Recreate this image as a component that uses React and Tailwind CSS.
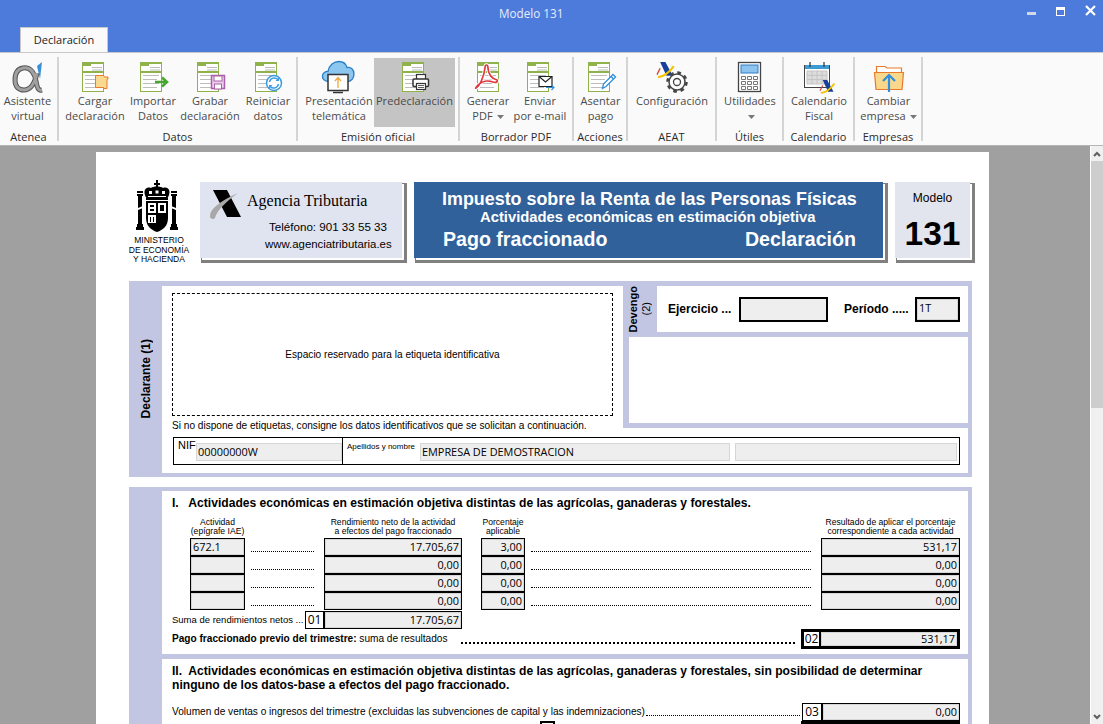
const GREEN = "#8fb24a";

function Caret() {
  return (
    <svg width="7" height="4" viewBox="0 0 7 4" className="inline-block ml-[4px] align-middle">
      <path d="M0 0h7L3.500 4z" fill="#777" />
    </svg>
  );
}

function Doc({ dx = 0, children }) {
  return (
    <svg width="40" height="34" viewBox="0 0 40 34">
      <g transform={`translate(${dx} 0)`}>
        <rect x="7.500" y="2.500" width="21" height="29" fill="#fff" stroke={GREEN} />
        <rect x="7" y="2" width="22" height="2" fill={GREEN} />
        <rect x="7" y="4" width="9" height="2" fill={GREEN} />
        <rect x="8" y="11" width="20" height="2" fill={GREEN} />
        <path d="M17 7.500h10M17 10h10M10 15.500h16M10 19.500h14M10 23.500h16M10 27.500h14" stroke="#bdbdbd" strokeWidth="1" />
      </g>
      {children}
    </svg>
  );
}

function AeatMark({ x = 0, y = 0, s = 1 }) {
  return (
    <g transform={`translate(${x} ${y}) scale(${s})`}>
      <path d="M3 0h5l7 13H9z" fill="#16409a" />
      <path d="M1 14C5 15 12 10 16 4" fill="none" stroke="#f5c400" strokeWidth="2" />
      <path d="M0 12l3-6" fill="none" stroke="#d9363a" strokeWidth="1.200" />
    </g>
  );
}

const icons = {
  alpha: (
    <svg width="40" height="34" viewBox="0 0 40 34">
      <path d="M34 30c-4 1-5-3-6-9C26 11 21 7 15 8 9 9 7 14 7 20c0 7 4 10 9 10 7 0 11-8 13-17" fill="none" stroke="#555" strokeWidth="5" />
      <path d="M34 30c-4 1-5-3-6-9C26 11 21 7 15 8 9 9 7 14 7 20c0 7 4 10 9 10 7 0 11-8 13-17" fill="none" stroke="#a0a0a0" strokeWidth="3" />
      <path d="M29 6l5-4-2 17z" fill="#3a8fd8" />
    </svg>
  ),
  load: (
    <Doc>
      <path d="M20.500 15.500h8l1 1.500h3.500v2l-1 .5v9h-3l-.5-1h-8z" fill="#f9d88f" stroke="#e87a2a" />
    </Doc>
  ),
  import: (
    <Doc>
      <path d="M22 22h12M29 17.500l5 4.500-5 4.500" fill="none" stroke="#4aa52e" strokeWidth="2.500" />
    </Doc>
  ),
  save: (
    <Doc>
      <path d="M21.500 15.500h13v13h-13z" fill="#ecd0ec" stroke="#a860a8" strokeWidth="1.500" />
      <rect x="24" y="16" width="8" height="5" fill="#fff" stroke="#a860a8" />
      <rect x="24.500" y="24" width="7" height="5" fill="#fff" stroke="#a860a8" />
    </Doc>
  ),
  reset: (
    <Doc>
      <circle cx="26" cy="23" r="7.500" fill="#fff" stroke="#3a9ae0" strokeWidth="1.500" />
      <path d="M21.500 22a4.800 4.800 0 0 1 8.300-2.500M30.500 24a4.800 4.800 0 0 1-8.300 2.500" fill="none" stroke="#3a9ae0" strokeWidth="1.500" />
      <path d="M31 17.500v3.500h-3.500M21 28.500V25h3.500" fill="#3a9ae0" />
    </Doc>
  ),
  cloud: (
    <svg width="40" height="34" viewBox="0 0 40 34">
      <path d="M10 21.500C5 21.500 3 18.500 3.500 15.500 4 12.500 7 11 9 11.500 10 5 15 1.500 20 1.500c4 0 7 2.500 8 6 4-1 7 2 7 6.500s-3 7.500-7 7.500z" fill="#8cc7f0" stroke="#2a7fc4" strokeWidth="1.300" />
      <rect x="9" y="14.500" width="20" height="16" fill="#fff" stroke="#333" strokeWidth="1.500" />
      <path d="M14 32.500h10" stroke="#333" strokeWidth="1.500" />
      <path d="M19 28V18M16 21l3-3.500 3 3.500" fill="none" stroke="#f0a83c" strokeWidth="1.300" />
    </svg>
  ),
  print: (
    <Doc>
      <rect x="21.500" y="14.500" width="9" height="5" fill="#fff" stroke="#333" strokeWidth="1.200" />
      <rect x="18" y="19" width="15.500" height="7.500" rx="1" fill="#fff" stroke="#333" strokeWidth="1.500" />
      <rect x="21.500" y="23.500" width="9" height="6" fill="#fff" stroke="#333" strokeWidth="1.200" />
      <path d="M23 25.500h6M23 27.500h6" stroke="#333" strokeWidth=".8" />
    </Doc>
  ),
  pdf: (
    <Doc dx={2}>
      <path d="M8 28c4-2 8-12 9-20 0-4 3-4 3 0 0 6 4 11 9 12 1 2-1 3-4 2-5-2-11-1-15 3-2 2-3 4-2 3z" fill="none" stroke="#fff" strokeWidth="3.500" />
      <path d="M8 28c4-2 8-12 9-20 0-4 3-4 3 0 0 6 4 11 9 12 1 2-1 3-4 2-5-2-11-1-15 3-2 2-3 4-2 3z" fill="none" stroke="#e0383e" strokeWidth="1.700" />
    </Doc>
  ),
  mail: (
    <Doc>
      <path d="M19 16.500h13v10H19z" fill="#fff" stroke="#222" strokeWidth="1.200" />
      <path d="M19 16.500l6.500 5.500 6.500-5.500" fill="none" stroke="#222" strokeWidth="1.200" />
      <path d="M26 27.500h8M31.500 25l2.500 2.500-2.500 2.500" fill="none" stroke="#2f8fdc" strokeWidth="1.100" />
    </Doc>
  ),
  pen: (
    <Doc>
      <path d="M21.500 28.500l1-4.500L32 14.500l2.500 2.500-9.500 9.500z" fill="#fff" stroke="#2f8fdc" strokeWidth="1.300" />
      <path d="M30 16.500l2.500 2.500" stroke="#2f8fdc" strokeWidth="1.200" />
    </Doc>
  ),
  gear: (
    <svg width="40" height="34" viewBox="0 0 40 34">
      <AeatMark x={5} y={2} s={1.050} />
      <circle cx="25" cy="22" r="8" fill="#fff" stroke="#444" strokeWidth="1.500" />
      <circle cx="25" cy="22" r="9.500" fill="none" stroke="#444" strokeWidth="2.500" strokeDasharray="3.700 3.760" />
      <circle cx="25" cy="22" r="3.500" fill="#fff" stroke="#444" strokeWidth="1.300" />
    </svg>
  ),
  calc: (
    <svg width="40" height="34" viewBox="0 0 40 34">
      <rect x="8.500" y="2.500" width="22" height="29" fill="#fff" stroke="#444" strokeWidth="1.300" />
      <rect x="11" y="5" width="17" height="8" fill="#8cc4ef" stroke="#2f7fc1" />
      <path d="M11.500 16.500h4v3h-4zM17.500 16.500h4v3h-4zM23.500 16.500h4v3h-4zM11.500 21.500h4v3h-4zM17.500 21.500h4v3h-4zM23.500 21.500h4v3h-4zM11.500 26.500h4v3h-4zM17.500 26.500h4v3h-4zM23.500 26.500h4v3h-4z" fill="#fff" stroke="#777" />
    </svg>
  ),
  calendar: (
    <svg width="40" height="34" viewBox="0 0 40 34">
      <rect x="5.500" y="5.500" width="25" height="22" fill="#fff" stroke="#444" />
      <rect x="6" y="5" width="24" height="4" fill="#3d9bd4" />
      <path d="M11 2v5M25 2v5" stroke="#333" strokeWidth="1.200" />
      <path d="M8 11h20v13H8zM8 15.300h20M8 19.600h20M13 11v13M18 11v13M23 11v13" fill="#ddd" stroke="#c4c4c4" />
      <AeatMark x={21} y={20} s={0.9} />
    </svg>
  ),
  folder: (
    <svg width="40" height="34" viewBox="0 0 40 34">
      <path d="M7.500 13V6.500H16l2 1.500h14.500v5" fill="#fff" stroke="#e87a2a" strokeWidth="1.200" />
      <path d="M5.500 12.500h29l-1.500 17H7z" fill="#f9d88b" stroke="#e87a2a" strokeWidth="1.200" />
      <path d="M20 32V16M14 21l6-6 6 6" fill="none" stroke="#2f8fdc" strokeWidth="2.200" />
    </svg>
  ),
};

const groups = [
  { label: "Atenea", w: "w-[59px]", pad: "", items: [{ w: "w-[55px]", icon: "alpha", lines: ["Asistente", "virtual"] }] },
  {
    label: "Datos",
    w: "w-[239px]",
    pad: "pl-[6px]",
    items: [
      { w: "w-[60px]", icon: "load", lines: ["Cargar", "declaración"] },
      { w: "w-[56px]", icon: "import", lines: ["Importar", "Datos"] },
      { w: "w-[58px]", icon: "save", lines: ["Grabar", "declaración"] },
      { w: "w-[58px]", icon: "reset", lines: ["Reiniciar", "datos"] },
    ],
  },
  {
    label: "Emisión oficial",
    w: "w-[162px]",
    pad: "pl-[6px]",
    items: [
      { w: "w-[70px]", icon: "cloud", lines: ["Presentación", "telemática"] },
      { w: "w-[81px]", icon: "print", lines: ["Predeclaración"], active: true },
    ],
  },
  {
    label: "Borrador PDF",
    w: "w-[114px]",
    pad: "pl-[4px]",
    items: [
      { w: "w-[48px]", icon: "pdf", lines: ["Generar", "PDF"], caret: true },
      { w: "w-[56px]", icon: "mail", lines: ["Enviar", "por e-mail"] },
    ],
  },
  { label: "Acciones", w: "w-[54px]", pad: "", items: [{ w: "w-[53px]", icon: "pen", lines: ["Asentar", "pago"] }] },
  { label: "AEAT", w: "w-[89px]", pad: "", items: [{ w: "w-[88px]", icon: "gear", lines: ["Configuración"] }] },
  { label: "Útiles", w: "w-[67px]", pad: "", items: [{ w: "w-[66px]", icon: "calc", lines: ["Utilidades", ""], caret: true }] },
  { label: "Calendario", w: "w-[71px]", pad: "", items: [{ w: "w-[70px]", icon: "calendar", lines: ["Calendario", "Fiscal"] }] },
  { label: "Empresas", w: "w-[68px]", pad: "", items: [{ w: "w-[67px]", icon: "folder", lines: ["Cambiar", "empresa"], caret: true }] },
];

function RibbonButton({ item }) {
  return (
    <div className={`${item.w} h-[69px] mt-[1px] shrink-0 flex flex-col items-center pt-[2px] ${item.active ? "bg-[#c4c4c4]" : ""}`}>
      {icons[item.icon]}
      <div className="-mt-[1px] text-center leading-[15px] text-[#4a4a4a] whitespace-nowrap">
        {item.lines.map((l, i) => (
          <div key={i} className="h-[15px]">
            {l}
            {item.caret && i === 1 && <Caret />}
          </div>
        ))}
      </div>
    </div>
  );
}

function Ribbon() {
  return (
    <div className="h-[93px] shrink-0 bg-[#fafafa] border-t border-[#c8c8c8] flex pt-[4px] font-['Open_Sans',sans-serif] text-[11px] tracking-[0.05px]">
      {groups.map((g) => (
        <div key={g.label} className={`${g.w} shrink-0 h-[84px] border-r-2 border-[#d4d4d4] flex flex-col`}>
          <div className={`flex ${g.pad} h-[69px]`}>
            {g.items.map((it) => (
              <RibbonButton key={it.icon} item={it} />
            ))}
          </div>
          <div className="mt-[3px] text-center leading-[15px] text-[#2a2a2a] whitespace-nowrap">{g.label}</div>
        </div>
      ))}
    </div>
  );
}

const boxShadow = "shadow-[2px_2px_0_#fff,3px_3px_0_2px_#808080]";

function Emblem() {
  return (
    <svg width="44" height="53" viewBox="0 0 44 53" className="mr-[4px] shrink-0">
      <path d="M21 0h2v3h2v2h-2v2h-2V5h-2V3h2z" fill="#000" />
      <path d="M12 19C7 12 10 6 16 8c2-2 10-2 12 0 6-2 9 4 4 11z" fill="#000" />
      <path d="M14 11h3v3h-3zM20.500 10.500h3v3h-3zM27 11h3v3h-3zM13 16h18v1H13z" fill="#fff" />
      <rect x="11" y="18" width="22" height="2" fill="#000" />
      <path d="M11 21h22v17c0 8-5 12-11 14-6-2-11-6-11-14z" fill="#000" />
      <path d="M13 23h8v10h-8zM23 23h8v10h-8zM13 35h8v8h-8z" fill="#fff" />
      <path d="M15 25h4v2h-4zM15 29h4v2h-4zM25 25h4v6h-4zM25 36h5v8h-5zM15 37h1v5h-1zM18 37h1v5h-1z" fill="#000" />
      <path d="M2 14h6v2H7v28h1v3h1v3H1v-3h1v-3h1V16H2zM36 14h6v2h-1v28h1v3h1v3h-8v-3h1v-3h1V16h-1z" fill="#000" />
      <path d="M2 11h6v2H2zM36 11h6v2h-6z" fill="#000" />
      <path d="M3 28l5-2v2l-5 2zM36 26l5 2v2l-5-2z" fill="#fff" />
    </svg>
  );
}

function AeatLogo() {
  return (
    <svg width="34" height="32" viewBox="0 0 34 32" className="shrink-0">
      <path d="M5 1h14l14 27H19z" fill="#000" />
      <path d="M2 27C2 20 12 12 30 4 18 13 9 21 7 29 5 31 2 30 2 27z" fill="#a8a8a8" />
    </svg>
  );
}

function PageHeader() {
  return (
    <div className="flex items-start pt-[30px] font-['Liberation_Sans',sans-serif]">
      <div className="w-[60px] h-[76px] -mt-[2px] mr-[11px] flex flex-col items-center">
        <Emblem />
        <div className="mt-[3px] text-center text-[8.500px] leading-[9.500px] whitespace-nowrap">
          MINISTERIO
          <br />
          DE ECONOMÍA
          <br />
          Y HACIENDA
        </div>
      </div>
      <div className={`w-[202px] h-[76px] bg-[#e0e4f0] ${boxShadow} pl-[8px] pt-[7px]`}>
        <div className="flex items-start">
          <AeatLogo />
          <div className="ml-[5px] mt-[3px] font-['Liberation_Serif',serif] text-[16px] leading-[18px] whitespace-nowrap">Agencia Tributaria</div>
        </div>
        <div className="ml-[61px] -mt-[1px] text-[11.600px] leading-[14px]">Teléfono: 901 33 55 33</div>
        <div className="ml-[57px] mt-[3px] text-[11.400px] leading-[14px]">www.agenciatributaria.es</div>
      </div>
      <div className={`ml-[12px] w-[469px] h-[76px] bg-[#30619a] ${boxShadow} text-white font-bold pl-[28px] pr-[27px] pt-[7px] whitespace-nowrap`}>
        <div className="text-[17.900px] leading-[20px]">Impuesto sobre la Renta de las Personas Físicas</div>
        <div className="text-[14.800px] leading-[16px] ml-[38px]">Actividades económicas en estimación objetiva</div>
        <div className="flex justify-between text-[19.600px] leading-[22px] mt-[3px]">
          <span className="ml-[1px]">Pago fraccionado</span>
          <span>Declaración</span>
        </div>
      </div>
      <div className={`ml-[12px] w-[75px] h-[76px] bg-[#e2e4ee] ${boxShadow} flex flex-col items-center pt-[9px]`}>
        <div className="text-[12px] leading-[14px]">Modelo</div>
        <div className="font-bold text-[33.500px] leading-[40px] mt-[9px]">131</div>
      </div>
    </div>
  );
}

const inputFont = "font-['Open_Sans',sans-serif] whitespace-nowrap";
const inputText = "font-['Open_Sans',sans-serif] whitespace-nowrap text-[10.900px]";
const inputFill = "bg-[#eeeeee] shadow-[inset_0_0_0_1px_#d6d6d6]";

function Declarante() {
  return (
    <div className="mt-[23px] h-[196px] flex bg-[#c2c6e2]">
      <div className="w-[33px] flex items-center justify-center">
        <span className="[writing-mode:vertical-rl] rotate-180 font-bold text-[12px]">Declarante (1)</span>
      </div>
      <div className="w-[810px]">
        <div className="h-[147px] flex">
          <div className="w-[461px] mt-[5px] h-[142px] bg-white pl-[10px] pt-[7px]">
            <div className="w-[441px] h-[123px] border border-dashed border-black flex items-center justify-center text-[10.100px]">
              Espacio reservado para la etiqueta identificativa
            </div>
            <div className="mt-[4px] text-[10.100px] leading-[12px] whitespace-nowrap">
              Si no dispone de etiquetas, consigne los datos identificativos que se solicitan a continuación.
            </div>
          </div>
          <div className="w-[349px] pt-[5px] pr-[4px]">
            <div className="h-[46px] flex">
              <div className="w-[34px] flex items-center justify-center leading-[13px]">
                <span className="[writing-mode:vertical-rl] rotate-180 text-[11px] text-center">
                  <b>Devengo</b>
                  <br />
                  (2)
                </span>
              </div>
              <div className="flex-1 bg-white flex items-center pl-[11px] text-[12px] font-bold whitespace-nowrap">
                <span className="w-[71px]">Ejercicio ...</span>
                <div className="w-[89px] h-[25px] border-2 border-black bg-[#eeeeee]" />
                <span className="ml-[16px] w-[71px]">Período .....</span>
                <div className={`w-[45px] h-[25px] border-2 border-black font-normal pl-[2px] leading-[18px] ${inputText} ${inputFill}`}>1T</div>
              </div>
            </div>
            <div className="mt-[5px] ml-[6px] h-[86px] bg-white" />
          </div>
        </div>
        <div className="h-[45px] mr-[4px] bg-white pt-[9px] pl-[11px]">
          <div className="w-[787px] h-[28px] border border-black flex items-center">
            <div className="w-[169px] h-full border-r border-black flex items-start pl-[4px] pt-[1px]">
              <span className="text-[11px] leading-[13px] w-[18px]">NIF</span>
              <div className={`w-[146px] h-[18px] mt-[4px] pl-[2px] leading-[18px] ${inputText} ${inputFill}`}>00000000W</div>
            </div>
            <div className="flex items-start pl-[4px] h-full pt-[5px]">
              <span className="text-[8px] leading-[8px] w-[73px] whitespace-nowrap">Apellidos y nombre</span>
              <div className={`w-[310px] h-[18px] pl-[2px] leading-[18px] ${inputText} ${inputFill}`}>EMPRESA DE DEMOSTRACION</div>
              <div className={`w-[222px] h-[18px] ml-[5px] ${inputFill}`} />
            </div>
          </div>
        </div>
      </div>
    </div>
  );
}

const rowCols = "grid grid-cols-[55px_79px_138px_19px_44px_296px_139px]";

const rows = [
  { iae: "672.1", net: "17.705,67", pct: "3,00", res: "531,17" },
  { iae: "", net: "0,00", pct: "0,00", res: "0,00" },
  { iae: "", net: "0,00", pct: "0,00", res: "0,00" },
  { iae: "", net: "0,00", pct: "0,00", res: "0,00" },
];

function Cell({ children, className = "", plain = false }) {
  return <div className={`h-[18px] border border-black leading-[16px] ${plain ? `${inputFont} text-[12px] bg-white text-center` : `${inputText} px-[2px] ${inputFill}`} ${className}`}>{children}</div>;
}

function Dots() {
  return (
    <div className="pl-[6px] pr-[10px] pt-[13px]">
      <div className="border-b border-dotted border-black" />
    </div>
  );
}

function ActivityTable() {
  return (
    <div className="ml-[28px]">
      <div className={`${rowCols} h-[21px] pt-[1px] text-[8.600px] leading-[9px] text-center whitespace-nowrap`}>
        <div>Actividad<br />(epígrafe IAE)</div>
        <div />
        <div>Rendimiento neto de la actividad<br />a efectos del pago fraccionado</div>
        <div />
        <div>Porcentaje<br />aplicable</div>
        <div />
        <div>Resultado de aplicar el porcentaje<br />correspondiente a cada actividad</div>
      </div>
      {rows.map((r, i) => (
        <div key={i} className={rowCols}>
          <Cell>{r.iae}</Cell>
          <Dots />
          <Cell className="text-right">{r.net}</Cell>
          <div />
          <Cell className="text-right">{r.pct}</Cell>
          <Dots />
          <Cell className="text-right">{r.res}</Cell>
        </div>
      ))}
    </div>
  );
}

function Liquidacion() {
  return (
    <div className="mt-[10px] flex bg-[#c2c6e2] min-h-[240px]">
      <div className="w-[33px]" />
      <div className="w-[806px] pt-[4px]">
        <div className="h-[163px] bg-white pt-[5px]">
          <div className="pl-[10px] font-bold text-[12.100px] leading-[14px] whitespace-pre">I.   Actividades económicas en estimación objetiva distintas de las agrícolas, ganaderas y forestales.</div>
          <div className="h-[7px]" />
          <ActivityTable />
          <div className="flex pl-[10px] mt-[1px] h-[18px] text-[9.500px] leading-[18px]">
            <span className="w-[133px] whitespace-nowrap">Suma de rendimientos netos ...</span>
            <Cell plain className="w-[19px]">01</Cell>
            <Cell className="w-[138px] text-right">17.705,67</Cell>
          </div>
          <div className="flex items-center pl-[10px] pr-[8px] h-[20px] text-[10.100px] whitespace-nowrap">
            <span><b>Pago fraccionado previo del trimestre:</b> suma de resultados</span>
            <div className="flex-1 ml-[14px] mr-[6px] mt-[7px] border-b-2 border-dotted border-black" />
            <div className="w-[159px] h-[20px] border-[3px] border-black flex">
              <div className={`w-[17px] bg-white border-r-[2px] border-black text-center leading-[14px] text-[12px] ${inputFont}`}>02</div>
              <div className={`flex-1 text-right px-[2px] leading-[13px] ${inputText} ${inputFill}`}>531,17</div>
            </div>
          </div>
        </div>
        <div className="mt-[5px] h-[80px] bg-white pt-[5px]">
          <div className="pl-[10px] font-bold text-[12.100px] leading-[14px] whitespace-pre">
            {"II.  Actividades económicas en estimación objetiva distintas de las agrícolas, ganaderas y forestales, sin posibilidad de determinar\nninguno de los datos-base a efectos del pago fraccionado."}
          </div>
          <div className="mt-[11px] flex items-center pl-[10px] pr-[8px] h-[18px] text-[10.100px] whitespace-nowrap">
            <span>Volumen de ventas o ingresos del trimestre (excluidas las subvenciones de capital y las indemnizaciones)</span>
            <div className="flex-1 ml-[1px] mr-[2px] mt-[7px] border-b border-dotted border-black" />
            <Cell plain className="w-[20px]">03</Cell>
            <Cell className="w-[138px] text-right">0,00</Cell>
          </div>
          <div className="flex pl-[378px] pr-[8px]">
            <div className="w-[15px] h-[18px] border-2 border-black" />
            <div className="ml-auto w-[159px] h-[18px] border-[3px] border-black" />
          </div>
        </div>
      </div>
    </div>
  );
}

function Scrollbar() {
  return (
    <div className="w-[13px] shrink-0 h-full bg-[#f0f0f0] border-l border-white flex flex-col">
      <div className="h-[15px] flex items-center justify-center">
        <svg width="8" height="6" viewBox="0 0 8 6"><path d="M1 5l3-3 3 3" fill="none" stroke="#606060" strokeWidth="2" /></svg>
      </div>
      <div className="h-[247px] bg-[#cdcdcd]" />
      <div className="mt-auto h-[15px] flex items-center justify-center">
        <svg width="8" height="6" viewBox="0 0 8 6"><path d="M1 1l3 3 3-3" fill="none" stroke="#606060" strokeWidth="2" /></svg>
      </div>
    </div>
  );
}

export default function App() {
  return (
    <div className="w-[1103px] h-[724px] overflow-hidden flex flex-col bg-[#a0a0a0] font-['Liberation_Sans',sans-serif] text-black">
      <div className="h-[52px] shrink-0 bg-[#4d7bdc] flex flex-col font-['Open_Sans',sans-serif] text-[11.700px]">
        <div className="h-[28px] flex items-start">
          <span className="ml-[499px] mt-[5px] text-[#e6ecfa] leading-[16px]">Modelo 131</span>
          <div className="ml-auto flex items-start gap-[20px] pr-[7px] pt-[5px]">
            <div className="w-[9px] h-[3px] mt-[7px] bg-[#d0d8ea]" />
            <div className="w-[9px] h-[9px] mt-[2px] border border-t-[3px] border-white" />
            <svg width="11" height="11" viewBox="0 0 11 11"><path d="M1 1l9 9M10 1l-9 9" stroke="#fff" strokeWidth="2.200" /></svg>
          </div>
        </div>
        <div className="ml-[20px] w-[88px] h-[25px] bg-[#fafafa] border border-b-0 border-[#c8c8c8] flex items-center justify-center text-[11px] text-[#222]">
          Declaración
        </div>
      </div>
      <Ribbon />
      <div className="flex-1 min-h-0 border-t border-[#b5b5b5] flex">
        <div className="flex-1 min-w-0 overflow-hidden pl-[96px] pt-[6px]">
          <div className="w-[893px] h-[600px] bg-white pl-[33px] pr-[17px] overflow-hidden">
            <PageHeader />
            <Declarante />
            <Liquidacion />
          </div>
        </div>
        <Scrollbar />
      </div>
    </div>
  );
}
